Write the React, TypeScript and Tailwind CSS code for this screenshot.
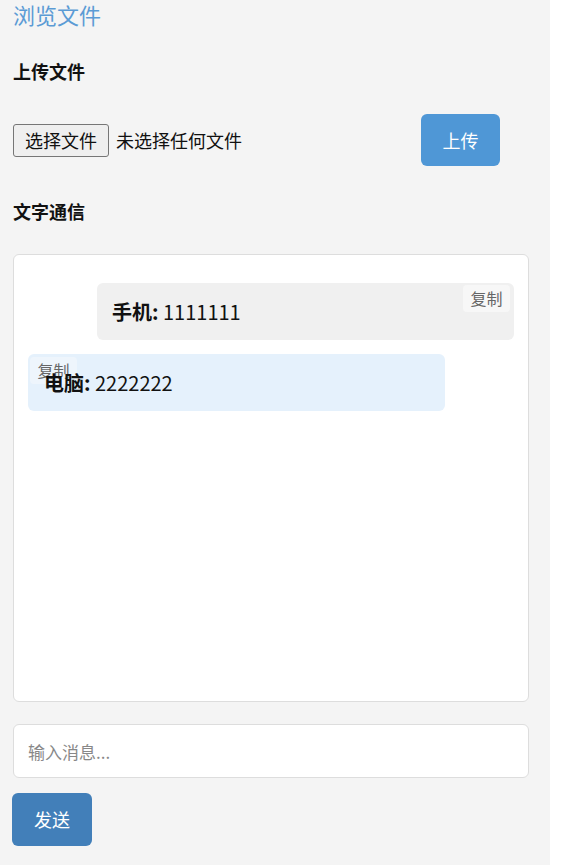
const font = "font-['Noto_Sans_CJK_SC','Noto_Sans',sans-serif]";

type Msg = { from: string; text: string; mine: boolean };

const messages: Msg[] = [
  { from: "手机", text: "1111111", mine: true },
  { from: "电脑", text: "2222222", mine: false },
];

function Bubble({ msg }: { msg: Msg }) {
  return (
    <div
      className={`relative w-[417px] h-[57px] rounded-[6px] flex items-center ${
        msg.mine ? "self-end bg-[#f0f0f0] pl-[15px]" : "self-start bg-[#e5f1fc] pl-[16px]"
      }`}
    >
      <button
        className={`absolute h-[27px] w-[47px] rounded-[4px] text-[16px] leading-[27px] text-[#666] ${
          msg.mine ? "top-[2px] right-[4px] bg-[#f7f7f7]" : "top-[3px] left-[2px] bg-[#eef5fc]"
        }`}
      >
        复制
      </button>
      <div className="relative text-[20px] leading-[28px] text-[#111]">
        <span className="font-bold">{msg.from}:</span> {msg.text}
      </div>
    </div>
  );
}

export default function App() {
  return (
    <div className={`flex min-h-[865px] bg-white ${font}`}>
      <div className="w-[550px] min-h-[865px] bg-[#f4f4f4] px-[13px]">
        {/* Nav link */}
        <a className="block pt-px text-[22px] leading-[26px] text-[#5b9bd5]">浏览文件</a>

        {/* Upload */}
        <h3 className="mt-[31px] text-[18px] leading-[26px] font-bold text-[#111]">上传文件</h3>
        <div className="mt-[30px] flex items-center h-[52px] w-[487px]">
          <button className="h-[33px] w-[96px] rounded-[3px] border border-[#767676] bg-[#efefef] text-[18px] leading-[31px] text-[#111]">
            选择文件
          </button>
          <span className="ml-[7px] text-[18px] text-[#111]">未选择任何文件</span>
          <button className="ml-auto h-[52px] w-[79px] rounded-[6px] bg-[#4f97d6] text-[18px] text-white">
            上传
          </button>
        </div>

        {/* Chat */}
        <h3 className="mt-[32px] text-[18px] leading-[26px] font-bold text-[#111]">文字通信</h3>
        <div className="mt-[30px] h-[448px] w-[516px] rounded-[6px] border border-[#dddddd] bg-white px-[14px] pt-[28px] flex flex-col gap-[14px]">
          {messages.map((m, i) => (
            <Bubble key={i} msg={m} />
          ))}
        </div>

        <input
          className="mt-[22px] block h-[54px] w-[516px] rounded-[6px] border border-[#dddddd] bg-white px-[14px] text-[17px] outline-none placeholder:text-[#888]"
          placeholder="输入消息..."
        />
        <button className="mt-[15px] -ml-px h-[53px] w-[80px] rounded-[6px] bg-[#427fb9] text-[18px] text-white">
          发送
        </button>
      </div>
    </div>
  );
}
